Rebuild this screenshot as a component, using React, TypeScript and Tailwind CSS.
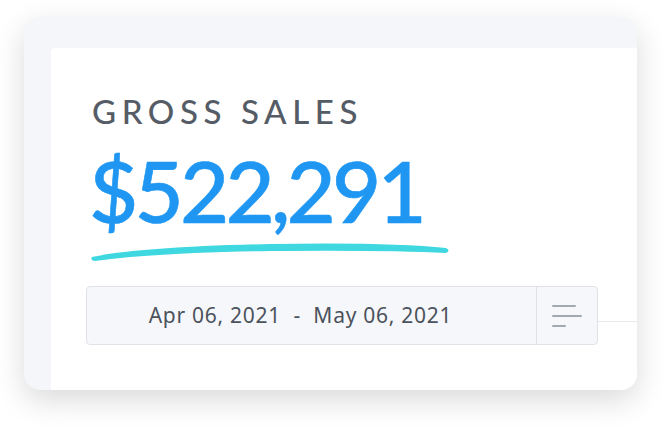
import React from 'react';

function FilterIcon() {
  return (
    <svg width="32" height="26" viewBox="0 0 32 26" fill="none">
      <rect x="1" y="2" width="24" height="2" rx="1" fill="#a2a8b0" />
      <rect x="1" y="12" width="30" height="2" rx="1" fill="#a2a8b0" />
      <rect x="1" y="22" width="14" height="2" rx="1" fill="#a2a8b0" />
    </svg>
  );
}

function Swoosh() {
  return (
    <svg width="362" height="26" viewBox="0 0 362 26" className="block">
      <path
        d="M2 19 Q 50 9 180 6 Q 300 4 356 10 Q 361 12.5 356 15 Q 300 12 180 13 Q 60 15 5 23 Q 0 22.5 2 19 Z"
        fill="#3fd8e0"
      />
    </svg>
  );
}

export default function App() {
  return (
    <div className="w-[672px] h-[429px] bg-white pt-[17px] pl-[24px] overflow-hidden">
      <div className="w-[613px] h-[373px] rounded-[16px] bg-[#f4f6f9] pt-[31px] pl-[27px] overflow-hidden shadow-[0_10px_30px_rgba(0,0,0,0.15)]">
        <div className="h-full bg-white rounded-tl-[4px] pl-[35px] pt-[47px]">
          <div className="pl-[6px]">
            <h2
              className="text-[33px] leading-none tracking-[0.17em] text-[#555c66] font-medium"
              style={{ fontFamily: 'Lato, sans-serif' }}
            >
              GROSS SALES
            </h2>
            <div
              className="mt-[20px] -ml-[3px] text-[85px] leading-none font-medium text-[#1f97f2] tracking-[-0.045em] [-webkit-text-stroke:0.6px_#1f97f2]"
              style={{ fontFamily: 'Lato, sans-serif' }}
            >
              $522,291
            </div>
            <div className="-ml-[2px] mt-[5px]">
              <Swoosh />
            </div>
          </div>
          <div className="mt-[22px] flex items-center">
            <div className="w-[512px] h-[59px] flex rounded-[4px] border border-[#dfe3e8] bg-[#f5f7fa]">
              <div className="flex-1 flex items-center justify-center pr-[22px]">
                <span
                  className="text-[21px] tracking-[0.035em] text-[#4b525c] whitespace-pre"
                  style={{ fontFamily: '"Noto Sans", sans-serif' }}
                >
                  {'Apr 06, 2021  -  May 06, 2021'}
                </span>
              </div>
              <div className="w-[61px] border-l border-[#dfe3e8] flex items-center justify-center">
                <FilterIcon />
              </div>
            </div>
            <div className="flex-1 h-px bg-[#e6e9ed] mt-[12px]" />
          </div>
        </div>
      </div>
    </div>
  );
}
